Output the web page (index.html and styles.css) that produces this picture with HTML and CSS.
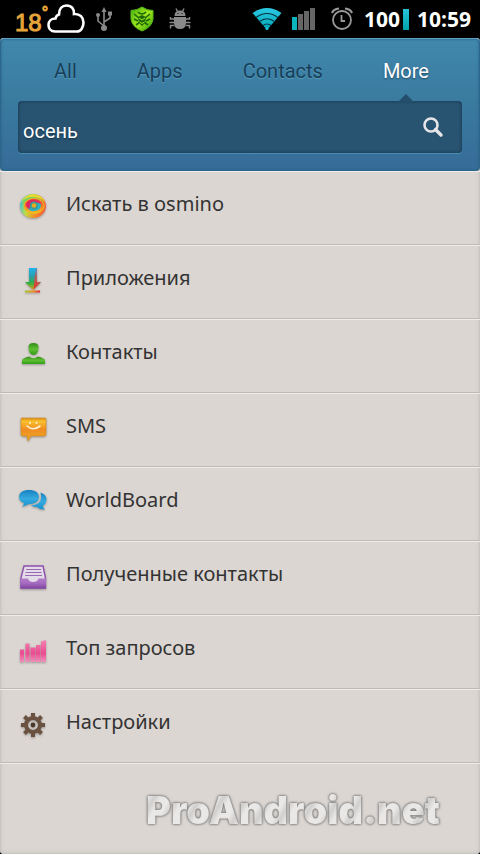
FILE: index.html
```html
<!DOCTYPE html>
<html lang="ru">

<head>
    <meta charset="UTF-8">
    <meta name="viewport" content="width=device-width, initial-scale=1">
    <title>osmino</title>
    <link rel="stylesheet" href="styles.css">
</head>

<body>
    <div class="status-bar">
        <span class="temp">18<span class="degree">°</span></span>
        <svg class="cloud" width="38" height="30" viewBox="0 0 38 30">
            <path d="M8 27.500C3.500 27.500 1.500 24 1.500 21C1.500 17 4.500 14.500 8.500 14.500C9 12 10 11 12 10.500C12 5 15 1.500 19.500 1.500C24.500 1.500 27.500 5 27 10C33 9.500 36.500 13.500 36.500 18.500C36.500 23 34 27.500 30 27.500Z" fill="none" stroke="#fff" stroke-width="2.600" />
        </svg>
        <svg class="usb" width="16" height="26" viewBox="0 0 16 26">
            <path d="M8 22V5M8 20L2 15V10M8 16L14 12V8" fill="none" stroke="#8a8a8a" stroke-width="1.600" />
            <path d="M8 1L10.500 6H5.500Z" fill="#8a8a8a" />
            <circle cx="8" cy="22" r="3" fill="#8a8a8a" />
            <circle cx="2" cy="9" r="2" fill="#8a8a8a" />
            <path d="M12 5.500h4v4h-4z" fill="#8a8a8a" />
        </svg>
        <svg class="shield" width="24" height="26" viewBox="0 0 24 26">
            <defs>
                <linearGradient id="shieldFill" x1="0" y1="0" x2="1" y2="1">
                    <stop offset="0" stop-color="#3fae10" />
                    <stop offset=".5" stop-color="#a5e81c" />
                    <stop offset="1" stop-color="#2f9a08" />
                </linearGradient>
            </defs>
            <path d="M12 1Q17 4.500 23 4.500V13Q22 21 12 25Q2 21 1 13V4.500Q7 4.500 12 1Z" fill="url(#shieldFill)" stroke="#56bd1a" />
            <path d="M12 9L16 11L15 17L12 20L9 17L8 11Z" fill="#1c6a08" />
            <path d="M8 6Q12 10 16 6M4 8l5 4M20 8l-5 4M4 13l4 2M20 13l-4 2M6 19l4-3M18 19l-4-3" fill="none" stroke="#1c6a08" stroke-width="1.600" />
            <path d="M9 12l3 2l3-2M9.500 16l2.500 1.500l2.500-1.500" fill="none" stroke="#a5e81c" />
        </svg>
        <svg class="bug" width="22" height="22" viewBox="0 0 22 22">
            <g fill="#8a8a8a">
                <path d="M5.500 8Q5.500 2.500 11 2.500Q16.500 2.500 16.500 8Z" />
                <path d="M5 9h12v6q0 6-6 6q-6 0-6-6z" />
            </g>
            <path d="M7 .5L8.500 3.500M15 .5L13.500 3.500M5 11H1.500V9M17 11H20.500V9M5 14.500H.5M17 14.500H21.500M5 17.500H1.500V20.500M17 17.500H20.500V20.500" fill="none" stroke="#8a8a8a" stroke-width="1.400" />
            <path d="M8.500 5h1v1h-1zM12.500 5h1v1h-1z" fill="#000" />
        </svg>

        <div class="status-right">
            <svg width="30" height="24" viewBox="0 0 30 24">
                <defs>
                    <linearGradient id="wifiFill" x1="0" y1="0" x2="0" y2="1">
                        <stop offset="0" stop-color="#2cc9e4" />
                        <stop offset="1" stop-color="#00a5b5" />
                    </linearGradient>
                </defs>
                <path d="M.5 6Q15-4 29.500 6L15 23Z" fill="url(#wifiFill)" />
                <path d="M4 10.500Q15 2.500 26 10.500M7.500 14.500Q15 9 22.500 14.500M11 18.500Q15 15.500 19 18.500" fill="none" stroke="#04323c" stroke-width="1.200" />
                <circle cx="15" cy="21.500" r="1.500" fill="#19c4d6" />
            </svg>
            <svg class="signal" width="24" height="22" viewBox="0 0 24 22">
                <path d="M0 9h5v13H0z" fill="#0cb4bd" />
                <path d="M6 6h5v16H6zM12 3h5v19h-5zM18 0h5v22h-5z" fill="#666" />
            </svg>
            <svg class="alarm" width="22" height="24" viewBox="0 0 22 24">
                <g fill="none" stroke="#999" stroke-width="1.800">
                    <circle cx="11" cy="13" r="9" />
                    <path d="M1 6Q2.500 2 8 1.500M21 6Q19.500 2 14 1.500" stroke-width="2.200" />
                    <path d="M10.500 8V14H14" />
                </g>
            </svg>
            <span class="battery">100</span>
            <span class="battery-bar"></span>
            <time class="clock">10:59</time>
        </div>
    </div>

    <main class="panel">
        <header class="header">
            <nav class="tabs">
                <button class="tab" type="button">All</button>
                <button class="tab" type="button">Apps</button>
                <button class="tab" type="button">Contacts</button>
                <button class="tab active" type="button">More</button>
            </nav>
            <form class="search">
                <input class="search-input" type="text" value="осень" aria-label="Поиск">
                <button class="search-button" type="button" aria-label="Искать">
                    <svg width="22" height="22" viewBox="0 0 22 22">
                        <circle cx="9" cy="9" r="6.500" fill="none" stroke="#e6e6e8" stroke-width="2.600" />
                        <path d="M13.500 13.500L19 19" stroke="#e6e6e8" stroke-width="3.400" stroke-linecap="round" />
                    </svg>
                </button>
            </form>
        </header>

        <ul class="menu">
            <li>
                <a class="item" href="#search">
                    <svg class="icon" width="30" height="30" viewBox="0 0 30 30">
                        <defs>
                            <linearGradient id="eyeOuter" x1="0" y1=".3" x2="1" y2=".6">
                                <stop offset="0" stop-color="#35c5e0" />
                                <stop offset=".35" stop-color="#c5dc3c" />
                                <stop offset=".7" stop-color="#f58a28" />
                                <stop offset="1" stop-color="#f0603a" />
                            </linearGradient>
                            <linearGradient id="eyeInner" x1="0" y1="0" x2="0" y2="1">
                                <stop offset="0" stop-color="#f0304a" />
                                <stop offset=".5" stop-color="#f07a28" />
                                <stop offset="1" stop-color="#f5c51e" />
                            </linearGradient>
                        </defs>
                        <ellipse cx="15" cy="14" rx="13" ry="12" fill="url(#eyeOuter)" />
                        <path d="M3 10Q7 2 16 2.500Q24 3 27 10Q22 5 15 5Q8 5 3 10Z" fill="#e2dc2e" />
                        <path d="M4 10Q8 4.500 16 5Q23 5.500 26 12Q20 8 14 8Q8 8 5 13Z" fill="#7cd060" />
                        <ellipse cx="16" cy="14" rx="10" ry="7.500" fill="url(#eyeInner)" stroke="#f5b51e" />
                        <path d="M9 15Q11 20 17 19Q23 18 23 13Q21 9 16 9Q12 9 9 15Z" fill="#28b4c8" />
                        <path d="M8 12Q11 7 17 8Q22 9 23 12Q18 9 14 11Q11 13 12 17Q8 16 8 12Z" fill="#e02460" />
                        <circle cx="16" cy="13.500" r="4" fill="#3f9a90" />
                        <circle cx="16" cy="13.500" r="2.200" fill="#f0a81e" />
                    </svg>
                    Искать в osmino
                </a>
            </li>
            <li>
                <a class="item" href="#apps">
                    <svg class="icon" width="30" height="30" viewBox="0 0 30 30">
                        <defs>
                            <linearGradient id="arrowFill" x1="0" y1="0" x2="0" y2="1">
                                <stop offset="0" stop-color="#1eb4f0" />
                                <stop offset=".4" stop-color="#2a9ea8" />
                                <stop offset=".7" stop-color="#35b03a" />
                                <stop offset="1" stop-color="#f0a020" />
                            </linearGradient>
                            <linearGradient id="arrowSide" x1="0" y1="0" x2="0" y2="1">
                                <stop offset="0" stop-color="#3aa0e0" />
                                <stop offset=".4" stop-color="#b0605c" />
                                <stop offset="1" stop-color="#e8382c" />
                            </linearGradient>
                            <linearGradient id="lineFill">
                                <stop offset="0" stop-color="#9ccc28" />
                                <stop offset=".5" stop-color="#f09a1e" />
                                <stop offset="1" stop-color="#e8243c" />
                            </linearGradient>
                        </defs>
                        <path d="M11 2h8v14h4l-8 8l-8-8h4z" fill="url(#arrowFill)" />
                        <path d="M17.500 2H19v14h4l-7.500 7.500z" fill="url(#arrowSide)" />
                        <path d="M7 24.500h15v2H7z" fill="url(#lineFill)" />
                    </svg>
                    Приложения
                </a>
            </li>
            <li>
                <a class="item" href="#contacts">
                    <svg class="icon" width="30" height="30" viewBox="0 0 30 30">
                        <defs>
                            <linearGradient id="personFill" x1="0" y1="0" x2="0" y2="1">
                                <stop offset="0" stop-color="#2f8c16" />
                                <stop offset=".5" stop-color="#5fbf33" />
                                <stop offset="1" stop-color="#329c18" />
                            </linearGradient>
                        </defs>
                        <path d="M10.500 8Q10 3 15.500 3Q21 3 20.500 8Q20 15 15.500 15Q11 15 10.500 8Z" fill="url(#personFill)" />
                        <path d="M4 24V20Q5 18 11 16.500Q15.500 20 20 16.500Q26 18 27 20V24Z" fill="url(#personFill)" />
                    </svg>
                    Контакты
                </a>
            </li>
            <li>
                <a class="item" href="#sms">
                    <svg class="icon" width="30" height="30" viewBox="0 0 30 30">
                        <defs>
                            <linearGradient id="smsFill" x1="0" y1="0" x2="0" y2="1">
                                <stop offset="0" stop-color="#d8901a" />
                                <stop offset=".15" stop-color="#fac02e" />
                                <stop offset=".5" stop-color="#f08c22" />
                                <stop offset="1" stop-color="#eaaa24" />
                            </linearGradient>
                        </defs>
                        <path d="M4 4h23q1 0 1 1v15q0 2-2 2H13l-3 5l-1-5H5q-2 0-2-2V5q0-1 1-1z" fill="url(#smsFill)" stroke="#d2881e" stroke-width=".6" />
                        <circle cx="12" cy="9" r="1" fill="#fff3d8" />
                        <circle cx="18.500" cy="9" r="1" fill="#fff3d8" />
                        <path d="M9 12Q15 17.500 22 12" fill="none" stroke="#fff3d8" stroke-width="1.600" stroke-linecap="round" />
                    </svg>
                    SMS
                </a>
            </li>
            <li>
                <a class="item" href="#worldboard">
                    <svg class="icon" width="30" height="30" viewBox="0 0 30 30">
                        <defs>
                            <linearGradient id="chatFill" x1="0" y1="0" x2="0" y2="1">
                                <stop offset="0" stop-color="#1681c0" />
                                <stop offset=".5" stop-color="#36aadf" />
                                <stop offset="1" stop-color="#1b93cf" />
                            </linearGradient>
                        </defs>
                        <path d="M11 2C17 2 21 4.500 21 9C21 13.500 17 16 11 16L4 19Q6 17 6 15C3 14 1 12 1 9C1 4.500 5 2 11 2Z" fill="url(#chatFill)" />
                        <path d="M22.500 4.500C27 6 29 9 28.500 12.500Q28 16 25 17.500Q25 20 27 21.500Q22 22 19 19Q15 19 13 17.500Q20 17 22.500 12.500Q24 9 22.500 4.500Z" fill="url(#chatFill)" />
                    </svg>
                    WorldBoard
                </a>
            </li>
            <li>
                <a class="item" href="#received">
                    <svg class="icon" width="30" height="30" viewBox="0 0 30 30">
                        <defs>
                            <linearGradient id="trayFill" x1="0" y1="0" x2="0" y2="1">
                                <stop offset="0" stop-color="#b07cc8" />
                                <stop offset=".5" stop-color="#a468c0" />
                                <stop offset="1" stop-color="#7e449e" />
                            </linearGradient>
                        </defs>
                        <path d="M6 4h19l2.500 12V26H3V16z" fill="#e4dbe8" stroke="#9050b0" stroke-width="1.400" />
                        <path d="M8 7.500h15M7.500 10.500h16M7 13.500h17" stroke="#9a6ab2" stroke-width="1.200" />
                        <path d="M2.500 16.500H10Q11 20 15 20Q19.500 20 20.500 16.500H28V26.500H2.500Z" fill="url(#trayFill)" />
                    </svg>
                    Полученные контакты
                </a>
            </li>
            <li>
                <a class="item" href="#top">
                    <svg class="icon" width="30" height="30" viewBox="0 0 30 30">
                        <defs>
                            <linearGradient id="barFill" x1="0" y1="0" x2="0" y2="1">
                                <stop offset="0" stop-color="#f582b4" />
                                <stop offset=".6" stop-color="#ea4a90" />
                                <stop offset="1" stop-color="#f290bc" />
                            </linearGradient>
                        </defs>
                        <path d="M2 13.500h4V26H2zM7.500 7.500h4V26h-4zM12.500 11.500h5V26h-5zM18 9h4.500v17H18zM23 5.500L28 4V26h-5z" fill="url(#barFill)" />
                    </svg>
                    Топ запросов
                </a>
            </li>
            <li>
                <a class="item" href="#settings">
                    <svg class="icon" width="30" height="30" viewBox="0 0 30 30">
                        <path d="M15 3V8M15 22V27M3 15H8M22 15H27M6.500 6.500L10 10M20 20L23.500 23.500M6.500 23.500L10 20M20 10L23.500 6.500" stroke="#6b5240" stroke-width="4" />
                        <circle cx="15" cy="15" r="7" fill="none" stroke="#6b5240" stroke-width="4" />
                        <circle cx="15" cy="15" r="2.400" fill="#4a382c" />
                    </svg>
                    Настройки
                </a>
            </li>
        </ul>

        <footer class="footer">
            <span class="brand">ProAndroid.net</span>
        </footer>
    </main>
</body>

</html>
```
FILE: styles.css
```css
* {
    box-sizing: border-box;
}

body {
    margin: 0;
    min-height: 100vh;
    display: flex;
    flex-direction: column;
    background: #000;
    font-family: "Noto Sans", sans-serif;
    color: #333;
}

button,
input {
    margin: 0;
    padding: 0;
    border: 0;
    background: none;
    color: inherit;
    font: inherit;
}

svg {
    display: block;
    flex: none;
}

/* Status bar */
.status-bar {
    height: 38px;
    padding: 0 9px 0 15px;
    display: flex;
    align-items: center;
    color: #fff;
}

.temp {
    width: 32px;
    display: flex;
    align-items: flex-start;
    padding-top: 8px;
    font: 24px/28px "Liberation Sans", sans-serif;
    color: #e6a53a;
    -webkit-text-stroke: 1px #e6a53a;
}

.degree {
    margin-top: -6px;
    font-size: 16px;
    line-height: 20px;
}

.usb {
    margin-left: 11px;
}

.shield {
    margin-left: 18px;
}

.bug {
    margin-left: 15px;
}

.status-right {
    margin-left: auto;
    display: flex;
    align-items: center;
    font: bold 21px/38px "Open Sans", sans-serif;
}

.signal {
    margin-left: 10px;
}

.alarm {
    margin-left: 15px;
}

.battery {
    margin-left: 11px;
}

.battery-bar {
    width: 6px;
    height: 21px;
    margin: 0 8px 0 3px;
    background: linear-gradient(#27c4d6, #00a2ad);
}

/* Panel */
.panel {
    flex: 1;
    display: flex;
    flex-direction: column;
    border-radius: 4px;
    background: #dbd6d2;
    box-shadow: inset 0 0 0 1px #c9c5c1, inset 0 0 4px #bdb8b4;
}

.header {
    height: 133px;
    padding: 0 18px;
    border: 1px solid #2b668d;
    border-top-color: #5a9fc0;
    border-radius: 4px;
    background: linear-gradient(#4088ac, #3a7a9f 50%, #356c98);
    box-shadow: inset 0 0 3px #2d6287;
}

.tabs {
    height: 62px;
    padding: 2px 32px 0 35px;
    display: flex;
    justify-content: space-between;
    align-items: center;
}

.tab {
    font: 20px/28px Roboto, sans-serif;
    color: #173f59;
    text-shadow: 0 1px 1px #5a9cbc;
}

.tab.active {
    position: relative;
    color: #fff;
    text-shadow: 0 1px 2px #1c4660;
}

/* Pointer from the active tab to the search box */
.tab.active::after {
    content: "";
    position: absolute;
    left: 50%;
    bottom: -17px;
    width: 16px;
    height: 8px;
    margin-left: -8px;
    background: #234f6c;
    clip-path: polygon(50% 0, 100% 100%, 0 100%);
}

.search {
    height: 52px;
    margin: 0 -1px;
    display: flex;
    border-radius: 4px;
    background: #285472;
    box-shadow: inset 0 0 3px 1px #1c4058, 0 1px 0 #4a8db2;
}

.search-input {
    flex: 1;
    min-width: 0;
    padding: 8px 0 0 5px;
    color: #fff;
    font: 20px/28px Roboto, sans-serif;
    text-shadow: 0 1px 2px #142f42;
    outline: 0;
}

.search-button {
    width: 58px;
    display: flex;
    align-items: center;
    justify-content: center;
}

/* Menu */
.menu {
    margin: 0;
    padding: 0;
    list-style: none;
}

.item {
    height: 74px;
    padding: 0 18px 8px;
    display: flex;
    align-items: center;
    gap: 18px;
    border-top: 1px solid #efecea;
    border-bottom: 1px solid #bfbab6;
    color: #333;
    font-size: 20px;
    line-height: 28px;
    text-decoration: none;
}

.icon {
    margin-top: 6px;
    filter: drop-shadow(0 1px 1px rgba(0, 0, 0, 0.3));
}

.footer {
    flex: 1;
    padding: 20px 40px 0;
    border-top: 1px solid #efecea;
    text-align: right;
}

.brand {
    display: inline-block;
    font: 900 38px/52px Inter, sans-serif;
    color: transparent;
    background: repeating-linear-gradient(120deg, #e9e8e7 0 8px, #d0cfce 14px, #e9e8e7 20px);
    -webkit-background-clip: text;
    background-clip: text;
    filter: drop-shadow(0 0 1px #777) drop-shadow(0 0 1px #888);
}
```
